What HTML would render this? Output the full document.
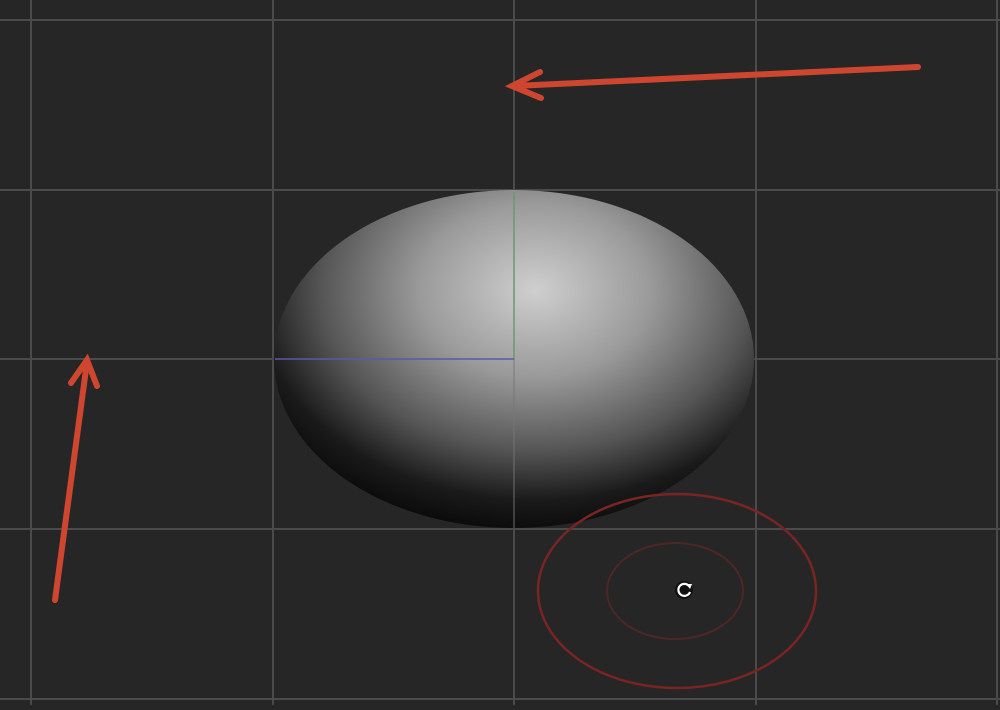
<!DOCTYPE html>
<html><head><style>html,body{margin:0;padding:0;background:#262626;overflow:hidden}</style></head>
<body>
<svg width="1000" height="705" viewBox="0 0 1000 705" xmlns="http://www.w3.org/2000/svg">
<defs>
<radialGradient id="g" cx="535" cy="290" r="330" gradientUnits="userSpaceOnUse" gradientTransform="translate(535 290) scale(1 0.75) translate(-535 -290)">
<stop offset="0" stop-color="#cfcfcf"/>
<stop offset="0.35" stop-color="#9a9a9a"/>
<stop offset="0.65" stop-color="#555"/>
<stop offset="0.85" stop-color="#1a1a1a"/>
<stop offset="1" stop-color="#080808"/>
</radialGradient>
</defs>
<rect width="1000" height="705" fill="#262626"/>
<g stroke="#4b4b4b" stroke-width="2">
<line x1="31" y1="0" x2="31" y2="705"/>
<line x1="273" y1="0" x2="273" y2="705"/>
<line x1="514" y1="0" x2="514" y2="705"/>
<line x1="756" y1="0" x2="756" y2="705"/>
<line x1="997" y1="0" x2="997" y2="705"/>
<line x1="0" y1="20" x2="1000" y2="20"/>
<line x1="0" y1="190" x2="1000" y2="190"/>
<line x1="0" y1="359" x2="1000" y2="359"/>
<line x1="0" y1="529" x2="1000" y2="529"/>
<line x1="0" y1="699" x2="1000" y2="699"/>
</g>
<ellipse cx="514" cy="359" rx="240" ry="169" fill="url(#g)"/>
<line x1="514" y1="359" x2="514" y2="528" stroke="#777" stroke-width="1.5" opacity="0.6"/>
<line x1="514" y1="192" x2="514" y2="359" stroke="#6a9a6a" stroke-width="1.5"/>
<line x1="275" y1="359" x2="514" y2="359" stroke="#5a5aa0" stroke-width="1.5"/>
<ellipse cx="677" cy="591" rx="139" ry="97" fill="none" stroke="#7a2424" stroke-width="2.5"/>
<ellipse cx="675" cy="591" rx="68" ry="48" fill="none" stroke="#4e2626" stroke-width="2"/>
<circle cx="684" cy="590" r="9" fill="#111"/>
<path d="M689 586 A6 6 0 1 0 690 592" fill="none" stroke="#fff" stroke-width="2.2"/>
<path d="M686 584 L692 584 L690 589 Z" fill="#fff"/>
<g stroke="#cf4630" stroke-width="6" stroke-linecap="round" fill="none">
<line x1="918" y1="67" x2="514" y2="86"/>
<path d="M540 72 L512 86 L541 98"/>
<line x1="55" y1="600" x2="87" y2="362"/>
<path d="M71 383 L87 360 L97 386"/>
</g>
</svg>
</body></html>
